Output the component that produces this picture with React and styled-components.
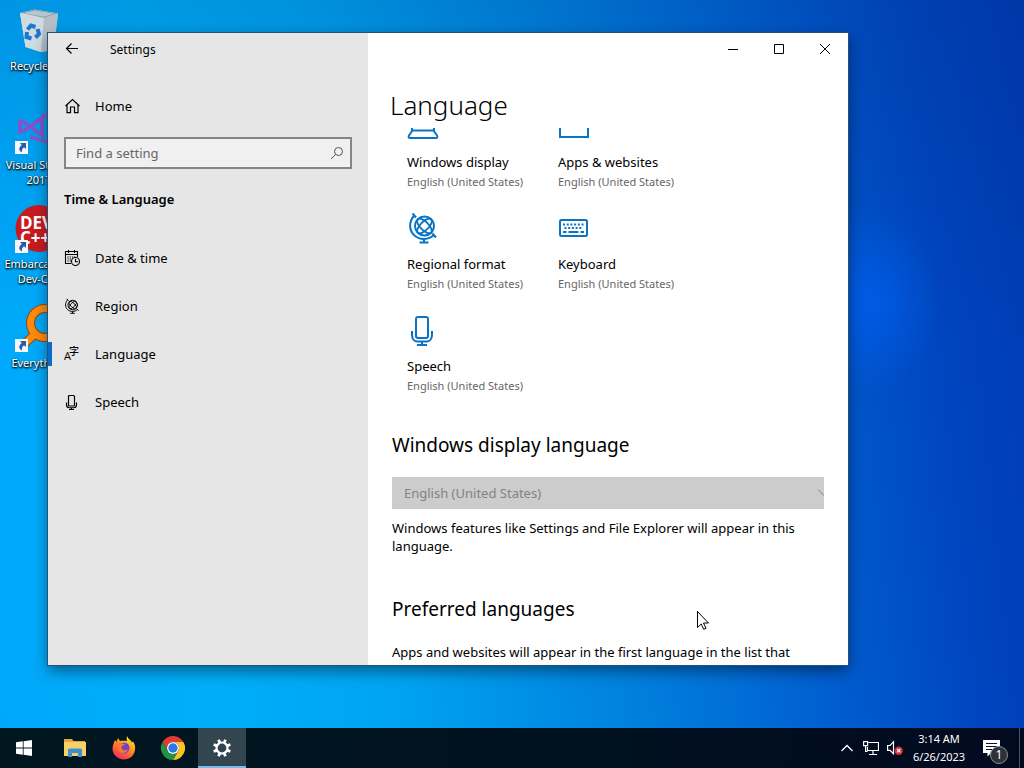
import React from 'react'
import styled, { createGlobalStyle } from 'styled-components'

const GlobalStyle = createGlobalStyle`
    * {
        box-sizing: border-box;
    }

    body {
        margin: 0;
        font-family: "Noto Sans", "Open Sans", sans-serif;
        color: #000;
    }

    h1, h2, p {
        margin: 0;
        font-weight: 400;
    }

    button, input, select {
        font-family: inherit;
        color: inherit;
        margin: 0;
        padding: 0;
        border: none;
        background: none;
    }

    svg {
        display: block;
        flex: none;
    }
`

const Screen = styled.div`
    height: 100vh;
    display: flex;
    flex-direction: column;
    overflow: hidden;
    background:
        radial-gradient(ellipse 70px 90px at 85% 39%, rgba(0, 98, 250, 0.6), rgba(0, 98, 250, 0)),
        linear-gradient(to bottom, rgba(0, 40, 110, 0.16), rgba(0, 60, 130, 0) 45%),
        linear-gradient(84deg, #00a8fc 0%, #00aef8 20%, #00a4f0 36%, #0080de 58%, #0056cc 80%, #0044be 90%, #003ab2 100%);
`

const Desktop = styled.main`
    position: relative;
    flex: 1;
    min-height: 0;
`

const Shortcuts = styled.div`
    width: 78px;
    display: flex;
    flex-direction: column;
`

const Shortcut = styled.button`
    height: 99px;
    padding-top: 7px;
    display: flex;
    flex-direction: column;
    align-items: center;
    gap: 3px;
    font-size: 11px;
    line-height: 15px;
    color: white;
    text-shadow: 1px 1px 2px #000, 0 1px 2px #000;
`

const ShortcutIcon = styled.span`
    position: relative;
    width: 48px;
    height: 48px;
`

const Arrow = styled.svg`
    position: absolute;
    left: 0;
    bottom: 0;
`

const Window = styled.section`
    position: absolute;
    top: 33px;
    right: 176px;
    bottom: 63px;
    left: 48px;
    display: flex;
    background-color: white;
    outline: 1px solid #24507a;
    box-shadow: 0 6px 14px rgba(0, 0, 0, 0.45);
`

const Sidebar = styled.aside`
    width: 40%;
    flex: none;
    background-color: #e6e6e6;
`

const TitleBar = styled.div`
    height: 32px;
    display: flex;
    align-items: center;
    font-size: 12px;
`

const BackButton = styled.button`
    width: 48px;
    height: 32px;
    margin-right: 14px;
    display: flex;
    align-items: center;
    justify-content: center;
`

const NavItem = styled.a`
    height: 48px;
    padding-left: 16px;
    display: flex;
    align-items: center;
    gap: 15px;
    font-size: 13px;
    color: #000;
    text-decoration: none;
    background: ${props => props.$active
        ? 'linear-gradient(#0a6cc8, #0a6cc8) left center / 4px 24px no-repeat'
        : 'none'};
`

const HomeLink = styled(NavItem)`
    margin-top: 17px;
`

const SearchBox = styled.label`
    height: 32px;
    margin: 7px 16px 0;
    padding: 0 6px 0 10px;
    display: flex;
    align-items: center;
    border: 2px solid #858585;
    background-color: #f0f0f0;
`

const SearchInput = styled.input`
    flex: 1;
    min-width: 0;
    font-size: 13px;
    outline: none;

    &::placeholder {
        color: #666;
        opacity: 1;
    }
`

const Category = styled.h2`
    margin: 20px 16px 25px;
    font-size: 13px;
    line-height: 20px;
    font-weight: 600;
`

const Content = styled.div`
    flex: 1;
    min-width: 0;
    display: flex;
    flex-direction: column;
`

const WindowButtons = styled(TitleBar)`
    justify-content: flex-end;
`

const WindowButton = styled.button`
    width: 46px;
    height: 32px;
    display: flex;
    align-items: center;
    justify-content: center;
`

const PageTitle = styled.h1`
    height: 63px;
    padding: 20px 22px 0;
    font-size: 26px;
    line-height: 40px;
    font-weight: 300;
`

const ScrollArea = styled.div`
    flex: 1;
    min-height: 0;
    overflow: hidden;
`

/* pulled up so the page looks scrolled part of the way */
const Page = styled.div`
    margin-top: -18px;
    padding: 0 24px;
`

const Tiles = styled.div`
    padding-left: 15px;
    display: grid;
    grid-template-columns: repeat(auto-fill, 151px);
    grid-auto-rows: 102px;
    max-width: 400px;
`

const Tile = styled.a`
    display: flex;
    flex-direction: column;
    color: #000;
    text-decoration: none;
    white-space: nowrap;
`

const TileName = styled.span`
    margin-top: 10px;
    font-size: 13px;
    line-height: 20px;
`

const TileValue = styled.span`
    font-size: 11px;
    line-height: 20px;
    color: #666;
`

const Heading = styled.h2`
    margin-top: ${props => props.$top};
    font-size: 19px;
    line-height: 28px;
`

const SelectBox = styled.div`
    position: relative;
    margin-top: 18px;
    overflow: hidden;
`

const Select = styled.select`
    width: 100%;
    height: 32px;
    display: block;
    padding-left: 12px;
    appearance: none;
    font-size: 13px;
    color: #838383;
    background-color: #ccc;
    opacity: 1;
`

const SelectArrow = styled.svg`
    position: absolute;
    top: 12px;
    right: -6px;
`

const Text = styled.p`
    margin-top: ${props => props.$top};
    font-size: 13px;
    line-height: 18px;
`

const Cursor = styled.svg`
    position: absolute;
    left: 697px;
    top: 611px;
    pointer-events: none;
`

const Taskbar = styled.footer`
    height: 40px;
    display: flex;
    align-items: stretch;
    justify-content: space-between;
    background: linear-gradient(to right, #001720, #00121f 50%, #020a20);
`

const TaskGroup = styled.div`
    display: flex;
    gap: 1px;
`

const TaskButton = styled.button`
    width: 48px;
    display: flex;
    align-items: center;
    justify-content: center;
    color: white;
    background-color: ${props => props.$active ? '#33464f' : 'transparent'};
    border-bottom: 2px solid ${props => props.$active ? '#76b9ed' : 'transparent'};
    border-top: 2px solid transparent;
`

const StartButton = styled(TaskButton)`
    margin-right: 2px;
`

const Tray = styled.div`
    display: flex;
    align-items: center;
    color: white;
`

const TrayButton = styled.button`
    width: 24px;
    height: 40px;
    display: flex;
    align-items: center;
    justify-content: center;
`

const Clock = styled.button`
    width: 64px;
    font-size: 11px;
    line-height: 18px;
    text-align: center;
    white-space: nowrap;
`

const Notifications = styled.button`
    position: relative;
    width: 49px;
    height: 40px;
    padding-left: 12px;
    border-right: 1px solid #46536a;
    margin-right: 4px;
`

const Badge = styled.span`
    position: absolute;
    left: 19px;
    bottom: 4px;
    width: 18px;
    height: 18px;
    border: 1px solid #8a8f94;
    border-radius: 50%;
    background-color: #2c3238;
    font-size: 12px;
    line-height: 16px;
    text-align: center;
`

const LineIcon = ({ size = 16, children, width = 1, color = 'currentColor', box = size }) => (
    <svg width={size} height={size} viewBox={`0 0 ${box} ${box}`} fill="none" stroke={color} strokeWidth={width}>
        {children}
    </svg>
)

const HomeIcon = () => (
    <LineIcon width={1.2}>
        <path d="M1.500 8 8.500 1.500l7 6.500M3 6.600v8h3.500V9h4v5.600H14v-8" />
    </LineIcon>
)

const DateIcon = () => (
    <LineIcon width={1.1}>
        <path d="M7 13.500H1.500V1.500h12V7M1.500 4.500h12M4.500 0v3M10.500 0v3" />
        <path d="M3.500 7h8M3.500 9h4.500M3.500 11h4" strokeDasharray="1.200 1" />
        <circle cx="11.500" cy="11.500" r="4" />
        <path d="M11.500 9v2.700H14" />
    </LineIcon>
)

const GlobeIcon = ({ size, color, width = 2 }) => (
    <LineIcon size={size} box={32} color={color} width={width}>
        <circle cx="17.500" cy="14" r="9.500" />
        <path d="M5.500 1.500 9 5.500M25.500 21.500l3.500 4" />
        <path d="M7 4C1.500 10 2 18.500 7.500 23.500c5.500 4.800 14 4.500 19.500-.5" />
        <path d="M17 27v3.500M12.500 30.600h9" />
        <ellipse cx="17.500" cy="14" rx="9.500" ry="4.200" transform="rotate(45 17.500 14)" strokeWidth={width * 0.9} />
        <ellipse cx="17.500" cy="14" rx="9.500" ry="4.200" transform="rotate(-45 17.500 14)" strokeWidth={width * 0.9} />
    </LineIcon>
)

const LanguageIcon = () => (
    <svg width="16" height="16" viewBox="0 0 16 16" fill="currentColor">
        <text x="0" y="14" fontSize="11" fontFamily="Open Sans, sans-serif">A</text>
        <text x="5" y="9" fontSize="10" fontWeight="500" fontFamily="Noto Sans CJK SC, sans-serif">字</text>
    </svg>
)

const MicIcon = ({ size, color, width = 2 }) => (
    <LineIcon size={size} box={32} color={color} width={width}>
        <rect x="9" y="3" width="12" height="21" rx="2" />
        <path d="M5 17v4c0 4 2.500 6.500 5.500 6.500h9c3 0 5.500-2.500 5.500-6.500v-4M15 27.500v4M10 31h10" />
    </LineIcon>
)

const LaptopIcon = () => (
    <LineIcon size={32} color="#0a74c4" width={2}>
        <path d="M5 8v12.500h22V8zM5.500 20.500 2 25.500q-1 2.500 1 2.500h26q2 0 1-2.500l-3.500-5" />
    </LineIcon>
)

const WebsiteIcon = () => (
    <LineIcon size={32} color="#0a74c4" width={2}>
        <path d="M2 6h28v21H2z" />
    </LineIcon>
)

const KeyboardIcon = () => (
    <LineIcon size={32} color="#0a74c4" width={2}>
        <rect x="2" y="8" width="27" height="16" rx="1.500" />
        <path d="M5 12.500h21M6.500 16h18" strokeDasharray="2 1.700" />
        <path d="M5 20h3.500M10.500 20h10M22.500 20H26" />
    </LineIcon>
)

const RecycleIcon = () => (
    <svg width="48" height="48" viewBox="0 0 48 48">
        <path d="M5 6 20 2.500 43 6.500 38.500 43 26 45 10.500 40z" fill="#c3d0d8" />
        <path d="M5 6 20 2.500 43 6.500 29 11z" fill="#8fa5b2" />
        <path d="M8 6.200 20 3.800 39 6.800 29 9.500z" fill="#b8c8d0" />
        <path d="M5 6 29 11 26 45 10.500 40z" fill="#cfdae1" />
        <path d="M29 11 43 6.500 38.500 43 26 45z" fill="#b3bfc6" />
        <g fill="none" stroke="#1b78cf" strokeWidth="4">
            <path d="M12.500 22.500 16 18.500l4.500 1.500" />
            <path d="M22.500 22l1.500 5-3.500 3.500" />
            <path d="M16.500 31.500 11.500 30l.5-5" />
        </g>
    </svg>
)

const VisualStudioIcon = () => (
    <svg width="48" height="48" viewBox="0 0 48 48" fill="none" stroke="#8751c9">
        <path d="M5 15v11l5-2L27 12v17L10 17z" strokeWidth="3.500" />
        <path d="M27 10l9-2v29l-21-6" strokeWidth="3.500" />
    </svg>
)

const DevIcon = () => (
    <svg width="48" height="48" viewBox="0 0 48 48">
        <circle cx="24" cy="23.500" r="23.500" fill="#c81b20" />
        <g fill="white" fontFamily="Open Sans, sans-serif" fontWeight="700" fontSize="17" style={{ textShadow: 'none' }}>
            <text x="5" y="24">DEV</text>
            <text x="5" y="39">C++</text>
        </g>
    </svg>
)

const EverythingIcon = () => (
    <svg width="48" height="48" viewBox="0 0 48 48" fill="none">
        <path d="M19 31 6 43" stroke="#8a4a10" strokeWidth="9" />
        <circle cx="30" cy="19" r="14.500" stroke="#8a4a10" strokeWidth="9" />
        <path d="M19 31 6 43" stroke="#ff8a0c" strokeWidth="7" />
        <circle cx="30" cy="19" r="14.500" stroke="#ff8a0c" strokeWidth="7" />
    </svg>
)

const FolderIcon = () => (
    <svg width="22" height="20" viewBox="0 0 22 20">
        <path d="M0 1h8l1.500 2H21v15H0z" fill="#e8a33b" />
        <path d="M0 4h22v14H0z" fill="#f8d06a" />
        <path d="M4 19v-7q0-1.500 1.500-1.500h11Q18 10.500 18 12v7h-4v-4H8v4z" fill="#3f8fd0" />
    </svg>
)

const FirefoxIcon = () => (
    <svg width="24" height="24" viewBox="0 0 24 24">
        <defs>
            <linearGradient id="fox" x1="0.800" y1="0.100" x2="0.300" y2="1">
                <stop offset="0" stopColor="#ffe226" />
                <stop offset="0.450" stopColor="#ff8a22" />
                <stop offset="1" stopColor="#f5265c" />
            </linearGradient>
        </defs>
        <path d="M15 0c1 3 4 4 5 6.500l1-1C23 8 23.500 11 23 14c-1 6-5.500 9.500-11 9.500S.500 19 .500 13C.500 9 2 7 3 4l1.500 2L6 2l2 3c3-.500 6 0 7 0-.500-2-.500-3.500 0-5z" fill="url(#fox)" />
        <circle cx="12" cy="12" r="5.500" fill="#7542c8" />
        <path d="M4 6c3-1 4 1 7 1.500l2 1-3 1.500c-1 1-1 3 1 4s4 0 5-.500c-1 4-8 5-10 0C5 11 4 9 4 6z" fill="#ff7a26" />
    </svg>
)

const ChromeIcon = () => (
    <svg width="24" height="24" viewBox="0 0 24 24">
        <path d="M12 6h10.400A12 12 0 0 0 1.600 6l5.200 9A6 6 0 0 1 12 6z" fill="#e33b2e" />
        <path d="M22.400 6H12a6 6 0 0 1 5.200 9L12 24A12 12 0 0 0 22.400 6z" fill="#fcc31e" />
        <path d="M1.600 6l5.200 9a6 6 0 0 0 10.400 0L12 24A12 12 0 0 1 1.600 6z" fill="#229342" />
        <circle cx="12" cy="12" r="6" fill="white" />
        <circle cx="12" cy="12" r="4.700" fill="#2a78e8" />
    </svg>
)

const GearIcon = () => (
    <svg width="20" height="20" viewBox="0 0 20 20" fill="none" stroke="white">
        <circle cx="10" cy="10" r="5.500" strokeWidth="2.200" />
        {[0, 45, 90, 135, 180, 225, 270, 315].map(angle => (
            <path key={angle} d="M10 4.500V1" strokeWidth="2.800" transform={`rotate(${angle + 22.5} 10 10)`} />
        ))}
    </svg>
)

const shortcuts = [
    { name: 'Recycle Bin', icon: <RecycleIcon /> },
    { name: 'Visual Studio 2017', icon: <VisualStudioIcon />, link: true },
    { name: 'Embarcadero Dev-C++', icon: <DevIcon />, link: true },
    { name: 'Everything', icon: <EverythingIcon />, link: true },
]

const navItems = [
    { name: 'Date & time', icon: <DateIcon /> },
    { name: 'Region', icon: <GlobeIcon size={16} /> },
    { name: 'Language', icon: <LanguageIcon />, active: true },
    { name: 'Speech', icon: <MicIcon size={16} width={2.4} /> },
]

const tiles = [
    { name: 'Windows display', icon: <LaptopIcon /> },
    { name: 'Apps & websites', icon: <WebsiteIcon /> },
    { name: 'Regional format', icon: <GlobeIcon size={32} color="#0a74c4" /> },
    { name: 'Keyboard', icon: <KeyboardIcon /> },
    { name: 'Speech', icon: <MicIcon size={32} color="#0a74c4" /> },
]

const App = () => {
  return (
    <Screen>
        <GlobalStyle />
        <Desktop>
            <Shortcuts>
                {shortcuts.map(item => (
                    <Shortcut key={item.name}>
                        <ShortcutIcon>
                            {item.icon}
                            {item.link && (
                                <Arrow width="13" height="13" viewBox="0 0 13 13">
                                    <path d="M0 0h13v13H0z" fill="#f4f7fb" />
                                    <path d="M5 2h6v6L9 6.200C7 8 6.500 9.500 7 11.500 3.500 10 3.500 6.500 6.800 4z" fill="#2c5aa8" />
                                </Arrow>
                            )}
                        </ShortcutIcon>
                        <span>{item.name}</span>
                    </Shortcut>
                ))}
            </Shortcuts>
            <Window>
                <Sidebar>
                    <TitleBar>
                        <BackButton aria-label="Back">
                            <LineIcon size={14} width={1.2}>
                                <path d="M13 6.500H1.500M6.500 1.500 1.500 6.500l5 5" />
                            </LineIcon>
                        </BackButton>
                        Settings
                    </TitleBar>
                    <HomeLink href="#home"><HomeIcon />Home</HomeLink>
                    <SearchBox>
                        <SearchInput type="text" placeholder="Find a setting" aria-label="Find a setting" />
                        <LineIcon size={14} color="#555" width={1}>
                            <circle cx="8.500" cy="5.500" r="4" />
                            <path d="M5.600 8.400 1 13" />
                        </LineIcon>
                    </SearchBox>
                    <Category>Time &amp; Language</Category>
                    <nav>
                        {navItems.map(item => (
                            <NavItem key={item.name} href="#" $active={item.active}>{item.icon}{item.name}</NavItem>
                        ))}
                    </nav>
                </Sidebar>
                <Content>
                    <WindowButtons>
                        <WindowButton aria-label="Minimize">
                            <LineIcon size={10}><path d="M0 5.500h10" /></LineIcon>
                        </WindowButton>
                        <WindowButton aria-label="Maximize">
                            <LineIcon size={10}><path d="M.500 .500h9v9h-9z" /></LineIcon>
                        </WindowButton>
                        <WindowButton aria-label="Close">
                            <LineIcon size={10}><path d="M0 0l10 10M10 0 0 10" /></LineIcon>
                        </WindowButton>
                    </WindowButtons>
                    <PageTitle>Language</PageTitle>
                    <ScrollArea>
                        <Page>
                            <Tiles>
                                {tiles.map(tile => (
                                    <Tile key={tile.name} href="#">
                                        {tile.icon}
                                        <TileName>{tile.name}</TileName>
                                        <TileValue>English (United States)</TileValue>
                                    </Tile>
                                ))}
                            </Tiles>
                            <Heading $top="15px">Windows display language</Heading>
                            <SelectBox>
                                <Select disabled aria-label="Windows display language">
                                    <option>English (United States)</option>
                                </Select>
                                <SelectArrow width="12" height="8" viewBox="0 0 12 8" fill="none" stroke="#838383">
                                    <path d="M0 .500 6 6.500l6-6" />
                                </SelectArrow>
                            </SelectBox>
                            <Text $top="10px">Windows features like Settings and File Explorer will appear in this language.</Text>
                            <Heading $top="40px">Preferred languages</Heading>
                            <Text $top="20px">Apps and websites will appear in the first language in the list that</Text>
                        </Page>
                    </ScrollArea>
                </Content>
            </Window>
        </Desktop>
        <Taskbar>
            <TaskGroup>
                <StartButton aria-label="Start">
                    <svg width="16" height="16" viewBox="0 0 16 16" fill="white">
                        <path d="M0 2.300 6.800 1.300v6.300H0zM7.600 1.200 16 0v7.600H7.600zM0 8.400h6.800v6.300L0 13.700zM7.600 8.400H16V16l-8.400-1.200z" />
                    </svg>
                </StartButton>
                <TaskButton aria-label="File Explorer"><FolderIcon /></TaskButton>
                <TaskButton aria-label="Firefox"><FirefoxIcon /></TaskButton>
                <TaskButton aria-label="Chrome"><ChromeIcon /></TaskButton>
                <TaskButton aria-label="Settings" $active><GearIcon /></TaskButton>
            </TaskGroup>
            <Tray>
                <TrayButton aria-label="Show hidden icons">
                    <LineIcon size={12} width={1.3}><path d="M.500 9 6 3.500 11.500 9" /></LineIcon>
                </TrayButton>
                <TrayButton aria-label="Network">
                    <LineIcon width={1.2}>
                        <path d="M5.500 2.500h10v8h-11V7M10 10.500v3.500M6 14.500h8M.600 1.600h4v4h-4zM2.600 5.600v5.900h2" />
                    </LineIcon>
                </TrayButton>
                <TrayButton aria-label="Volume muted">
                    <svg width="16" height="16" viewBox="0 0 16 16" fill="none" stroke="white">
                        <path d="M.600 5.500h2.500l3.400-3.800v12L3.100 10.300H.600z" strokeWidth="1.200" />
                        <circle cx="11.700" cy="10.700" r="4.200" fill="#d33038" stroke="none" />
                        <path d="M10 9l3.400 3.400M13.400 9 10 12.400" strokeWidth="1.200" />
                    </svg>
                </TrayButton>
                <Clock>3:14 AM<br />6/26/2023</Clock>
                <Notifications aria-label="1 new notification">
                    <svg width="17" height="17" viewBox="0 0 17 17">
                        <path d="M0 0h17v13H8l-3.500 3.500V13H0z" fill="white" />
                        <path d="M3 3.500h11M3 6.500h11M3 9.500h7" stroke="#0a1428" strokeWidth="1.200" />
                    </svg>
                    <Badge>1</Badge>
                </Notifications>
            </Tray>
        </Taskbar>
        <Cursor width="12" height="19" viewBox="0 0 12 19" fill="white" stroke="black">
            <path d="M.500 .500v16L4.200 13l2.500 5.300 2.300-1-2.500-5.300h5z" />
        </Cursor>
    </Screen>
  )
}

export default App
